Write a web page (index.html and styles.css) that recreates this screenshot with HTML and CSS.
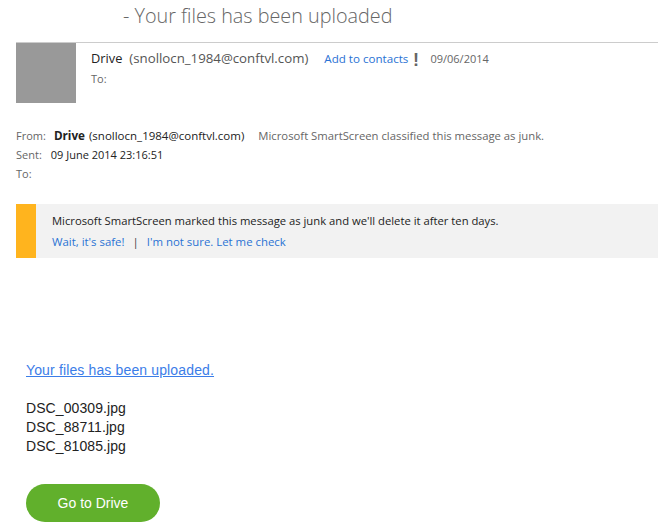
FILE: index.html
```html
<!DOCTYPE html>
<html lang="en">
<head>
    <meta charset="UTF-8">
    <meta name="viewport" content="width=device-width, initial-scale=1.0">
    <title>Your files has been uploaded</title>
    <link rel="stylesheet" href="styles.css">
</head>
<body>

<h1 class="subject">- Your files has been uploaded</h1>

<div class="sender">
    <div class="avatar"></div>
    <div class="sender-info">
        <div class="sender-line">
            <span class="sender-name">Drive</span>
            <span class="sender-mail">(snollocn_1984@conftvl.com)</span>
            <a class="link add-contact" href="#">Add to contacts</a>
            <span class="flag">!</span>
            <span class="sender-date">09/06/2014</span>
        </div>
        <div class="sender-to">To:</div>
    </div>
</div>

<div class="headers">
    <div class="header-row">
        <span class="from-label">From:</span>
        <b class="from-name">Drive</b>
        <span class="from-mail">(snollocn_1984@conftvl.com)</span>
        <span class="from-note">Microsoft SmartScreen classified this message as junk.</span>
    </div>
    <div class="header-row">
        <span class="sent-label">Sent:</span>
        <span class="sent-date">09 June 2014 23:16:51</span>
    </div>
    <div class="header-row">
        <span class="from-label">To:</span>
    </div>
</div>

<div class="junk-banner">
    <div class="junk-stripe"></div>
    <div class="junk-body">
        <div class="junk-text">Microsoft SmartScreen marked this message as junk and we'll delete it after ten days.</div>
        <div class="junk-links">
            <a class="link" href="#">Wait, it's safe!</a>
            <span class="junk-sep">|</span>
            <a class="link" href="#">I'm not sure. Let me check</a>
        </div>
    </div>
</div>

<div class="message">
    <a class="message-link" href="#">Your files has been uploaded.</a>
    <div class="file-list">
        <div>DSC_00309.jpg</div>
        <div>DSC_88711.jpg</div>
        <div>DSC_81085.jpg</div>
    </div>
    <a class="drive-button" href="#">Go to Drive</a>
</div>

</body>
</html>
```

FILE: styles.css
```css
html, body {
    height: 100%;
}

body {
    margin: 0;
    background-color: #fff;
    color: #444;
    font-family: "Open Sans", sans-serif;
    font-size: 11px;
    overflow: hidden;
}

.subject {
    margin: 0;
    padding-left: 123px;
    height: 42px;
    line-height: 31px;
    font-size: 19.8px;
    font-weight: 300;
    color: #666;
    box-sizing: border-box;
}

.sender {
    display: flex;
    margin-left: 16px;
    border-top: 1px solid #ccc;
}

.avatar {
    width: 60px;
    height: 60px;
    background-color: #999;
}

.sender-info {
    padding: 6px 0 0 15px;
}

.sender-line {
    display: flex;
    align-items: center;
    height: 18px;
}

.sender-name {
    font-size: 12.8px;
    color: #222;
}

.sender-mail {
    margin-left: 7px;
    font-size: 13.25px;
    color: #555;
}

.add-contact {
    margin-left: 16px;
    font-size: 11.6px;
}

.flag {
    margin: 4px 0 0 1px;
    width: 13px;
    text-align: center;
    font-family: "Liberation Sans", Arial, sans-serif;
    font-size: 18px;
    font-weight: 700;
    color: #666;
}

.sender-date {
    margin-left: 8px;
    color: #666;
}

.sender-to {
    margin-top: 3px;
    line-height: 18px;
    color: #666;
}

.link {
    color: #2a72d4;
    text-decoration: none;
}

.headers {
    margin: 23px 0 0 16px;
}

.header-row {
    display: flex;
    height: 19px;
    line-height: 19px;
    color: #222;
}

.from-label {
    color: #666;
}

.from-name {
    margin-left: 8px;
    font-size: 11.7px;
}

.from-mail {
    margin-left: 4px;
    font-size: 11.5px;
}

.from-note {
    margin-left: 14px;
    font-size: 11.3px;
    color: #666;
}

.sent-label {
    color: #666;
}

.sent-date {
    margin-left: 9px;
}

.junk-banner {
    display: flex;
    margin: 21px 0 0 16px;
    height: 54px;
    background-color: #f2f2f2;
}

.junk-stripe {
    width: 20px;
    background-color: #ffb41e;
}

.junk-body {
    padding: 8px 0 0 16px;
    color: #222;
}

.junk-text {
    line-height: 18px;
    font-size: 11.25px;
}

.junk-links {
    display: flex;
    margin-top: 3px;
    line-height: 18px;
    font-size: 11.4px;
}

.junk-sep {
    margin: 0 8px;
    color: #444;
}

.message {
    padding: 103px 0 0 26px;
    font-family: "Liberation Sans", Arial, sans-serif;
    font-size: 14px;
    color: #222;
}

.message-link {
    display: block;
    line-height: 19px;
    letter-spacing: 0.14px;
    color: #3b7de8;
}

.file-list {
    margin-top: 19px;
    line-height: 19px;
    letter-spacing: 0.08px;
}

.drive-button {
    display: block;
    margin-top: 28px;
    width: 134px;
    height: 38px;
    border-radius: 19px;
    background-color: #61b02c;
    color: #fff;
    line-height: 38px;
    text-align: center;
    text-decoration: none;
}
```
